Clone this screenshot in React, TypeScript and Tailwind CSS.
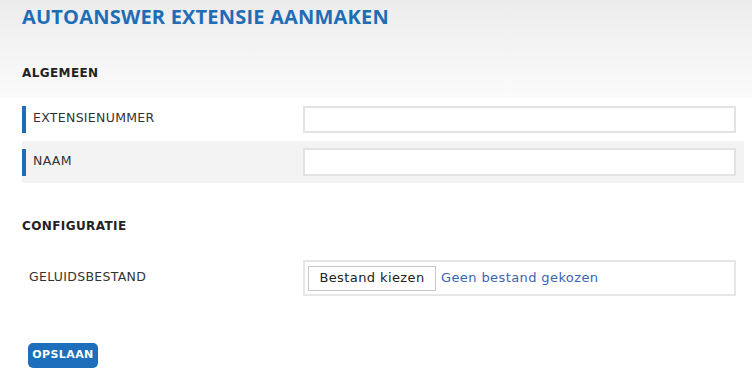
const dv = { fontFamily: '"DejaVu Sans", Verdana, sans-serif' };

export default function App() {
  return (
    <div className="w-[752px] h-[388px] bg-white overflow-hidden" style={{ fontFamily: '"Open Sans", "DejaVu Sans", sans-serif' }}>
      <div className="h-[98px] bg-gradient-to-b from-[#ececec] to-[#fbfbfb] px-[22px] pt-[4px]">
        <h1 className="text-[20px] font-bold text-[#1f6db5] leading-[26px] tracking-[0.2px]">AUTOANSWER EXTENSIE AANMAKEN</h1>
        <h2 style={dv} className="mt-[36px] text-[12px] font-bold text-[#222] leading-[14px] tracking-[0.4px]">ALGEMEEN</h2>
      </div>
      <div className="ml-[22px] w-[722px]">
        <div className="h-[43px] bg-white flex items-center">
          <div className="w-[4px] h-[27px] bg-[#1f6db5]" />
          <div style={dv} className="w-[277px] pl-[7px] text-[12.5px] text-[#333] -mt-[2px] tracking-[0.3px]">EXTENSIENUMMER</div>
          <div className="w-[433px] h-[27px] border-2 border-[#e3e3e3] bg-white" />
        </div>
        <div className="h-[42px] bg-[#f3f3f3] flex items-center">
          <div className="w-[4px] h-[27px] bg-[#1f6db5]" />
          <div style={dv} className="w-[277px] pl-[7px] text-[12.5px] text-[#333] -mt-[2px] tracking-[0.3px]">NAAM</div>
          <div className="w-[433px] h-[28px] border-2 border-[#e3e3e3] bg-white" />
        </div>
      </div>
      <h2 style={dv} className="ml-[22px] mt-[36px] text-[12px] font-bold text-[#222] leading-[14px] tracking-[0.4px]">CONFIGURATIE</h2>
      <div className="ml-[22px] mt-[27px] flex items-start">
        <div style={dv} className="w-[281px] pl-[7px] pt-[8px] text-[12.5px] text-[#333] tracking-[0.3px]">GELUIDSBESTAND</div>
        <div className="w-[433px] h-[36px] border-2 border-[#e6e6e6] flex items-center px-[3px]">
          <div style={dv} className="w-[128px] h-[25px] border border-[#c8c8c8] bg-white flex items-center justify-center text-[13px] text-[#222] tracking-[0.4px]">Bestand kiezen</div>
          <span style={dv} className="ml-[5px] text-[13px] text-[#3a64b0] tracking-[0.4px]">Geen bestand gekozen</span>
        </div>
      </div>
      <div style={dv} className="ml-[28px] mt-[47px] w-[70px] h-[25px] rounded-[5px] bg-[#1d6fbb] flex items-center justify-center text-[11px] font-bold text-white tracking-[0.4px]">OPSLAAN</div>
    </div>
  );
}
